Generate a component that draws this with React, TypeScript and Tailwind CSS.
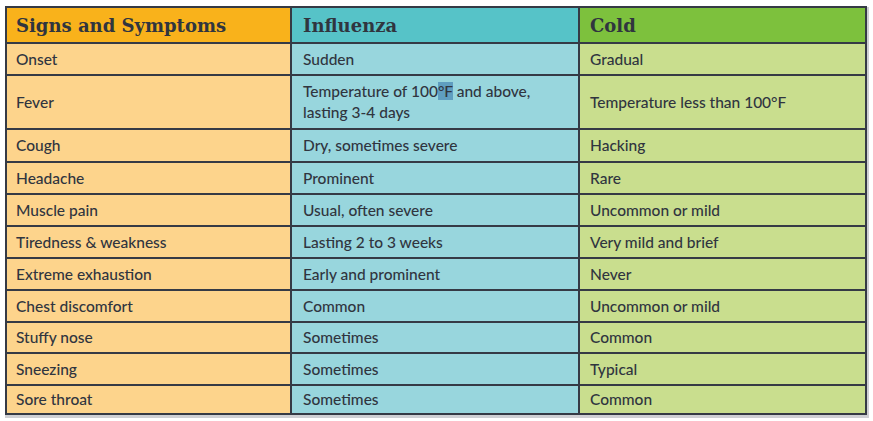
import React from "react";

type Row = { s: string; f: React.ReactNode; c: string; h: string };

const rows: Row[] = [
  { s: "Onset", f: "Sudden", c: "Gradual", h: "h-[30px]" },
  {
    s: "Fever",
    f: (
      <span>
        Temperature of 100<span className="bg-[#5f9ec0]">°F</span> and above,
        <br />
        lasting 3-4 days
      </span>
    ),
    c: "Temperature less than 100°F",
    h: "h-[52px]",
  },
  { s: "Cough", f: "Dry, sometimes severe", c: "Hacking", h: "h-[31px]" },
  { s: "Headache", f: "Prominent", c: "Rare", h: "h-[30px]" },
  { s: "Muscle pain", f: "Usual, often severe", c: "Uncommon or mild", h: "h-[30px]" },
  { s: "Tiredness & weakness", f: "Lasting 2 to 3 weeks", c: "Very mild and brief", h: "h-[30px]" },
  { s: "Extreme exhaustion", f: "Early and prominent", c: "Never", h: "h-[30px]" },
  { s: "Chest discomfort", f: "Common", c: "Uncommon or mild", h: "h-[30px]" },
  { s: "Stuffy nose", f: "Sometimes", c: "Common", h: "h-[29px]" },
  { s: "Sneezing", f: "Sometimes", c: "Typical", h: "h-[30px]" },
  { s: "Sore throat", f: "Sometimes", c: "Common", h: "h-[27px]" },
];

const body = "font-['Lato',sans-serif] font-medium text-[15.5px] leading-[21px] text-[#30353f]";
const head = "font-['DejaVu_Serif',serif] font-bold text-[18px] text-[#30353f]";

export default function App() {
  return (
    <div className="w-[873px] h-[421px] bg-white pt-[6px] pl-[5px]">
      <div className="w-[862px] grid grid-cols-[283px_286px_285px] gap-[2px] bg-[#353a45] p-[2px] shadow-[1px_2px_0_1px_#cfd0d4]">
        <div className={`h-[34px] bg-[#f9b21b] flex items-center pl-[9px] pt-[1px] ${head}`}>Signs and Symptoms</div>
        <div className={`h-[34px] bg-[#56c3c8] flex items-center pl-[11px] pt-[1px] ${head}`}>Influenza</div>
        <div className={`h-[34px] bg-[#7dc13d] flex items-center pl-[10px] pt-[1px] ${head}`}>Cold</div>
        {rows.map((r, i) => (
          <React.Fragment key={i}>
            <div className={`${r.h} bg-[#fdd48c] flex items-center pl-[9px] ${body}`}>{r.s}</div>
            <div className={`${r.h} bg-[#98d6dd] flex items-center pl-[11px] ${body}`}>{r.f}</div>
            <div className={`${r.h} bg-[#c9de8e] flex items-center pl-[10px] ${body}`}>{r.c}</div>
          </React.Fragment>
        ))}
      </div>
    </div>
  );
}
